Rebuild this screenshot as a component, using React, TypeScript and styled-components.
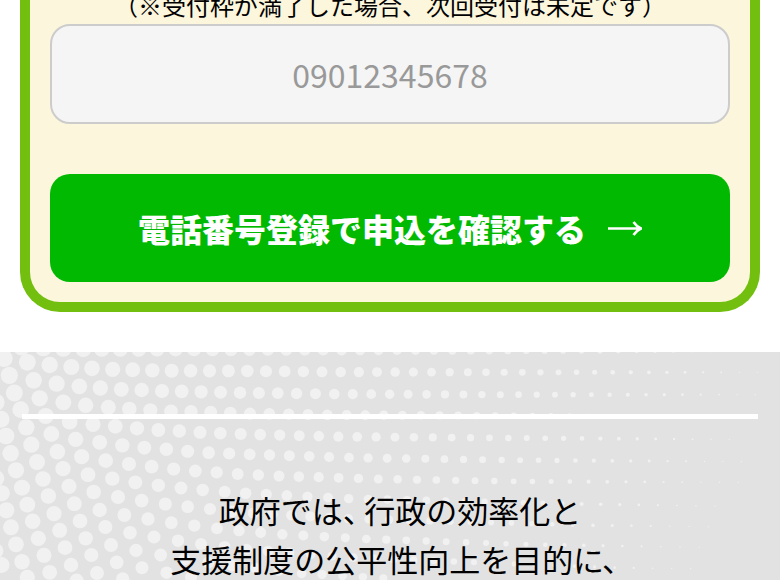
import React from "react";
import styled, { createGlobalStyle } from "styled-components";

const GlobalStyle = createGlobalStyle`
  *, *::before, *::after { box-sizing: border-box; }
  body {
    margin: 0;
    background: #fff;
    color: #000;
    font-family: "Noto Sans CJK JP", sans-serif;
    overflow-x: hidden;
  }
`;

const Page = styled.main`
  display: flex;
  flex-direction: column;
  gap: 40px;
  min-height: 100vh;
`;

const FormCard = styled.form`
  display: flex;
  flex-direction: column;
  margin: -12px 20px 0;
  padding: 0 20px 20px;
  border: 10px solid #72bf10;
  border-top: 0;
  border-radius: 0 0 40px 40px;
  background: #fcf6dc;
`;

const Note = styled.label`
  display: flex;
  justify-content: center;
  font-size: 24px;
  line-height: 34px;
  padding-bottom: 2px;
  white-space: nowrap;
`;

const PhoneInput = styled.input`
  width: 100%;
  height: 100px;
  padding: 0 20px;
  border: 2px solid #ccc;
  border-radius: 20px;
  background: #f5f5f5;
  color: #000;
  font-family: inherit;
  font-size: 32px;
  text-align: center;
  &::placeholder { color: #999; opacity: 1; }
`;

const SubmitButton = styled.button`
  display: flex;
  align-items: center;
  justify-content: center;
  gap: 22px;
  height: 108px;
  margin-top: 50px;
  border: 0;
  border-radius: 20px;
  background: #00b900;
  color: #fff;
  font-family: inherit;
  font-size: 32px;
  font-weight: 900;
  cursor: pointer;
`;

const ArrowIcon = styled.svg`
  width: 34px;
  height: 16px;
  fill: none;
  stroke: #fff;
  stroke-width: 2.6;
`;

const Purpose = styled.section`
  position: relative;
  flex: 1;
  overflow: hidden;
  background: #e2e2e2;
`;

const Halftone = styled.svg`
  position: absolute;
  inset: 0;
  width: 100%;
  fill: #f1f1f1;
`;

const PurposeBody = styled.div`
  position: relative;
  padding: 62px 22px 0;
`;

const Divider = styled.hr`
  height: 5px;
  margin: 0;
  border: 0;
  background: #fff;
`;

const Statement = styled.p`
  margin: 66px 0 0;
  padding-left: 20px;
  font-size: 31px;
  line-height: 49px;
  text-align: center;
  white-space: nowrap;
`;

const Comma = styled.span`
  margin-right: 6px;
  font-feature-settings: "halt";
`;

const LineEnd = styled.span`
  margin-right: 12px;
  font-feature-settings: "palt";
`;

type Anchor = [x: number, y: number, steps?: number];

/* Each row of dots runs left to right; steps is the number of dots
   from the previous anchor to this one. */
const rows: Anchor[][] = [
  [[-60, 0], [65, 6, 2], [130, 9], [190, 11], [250, 12], [1800, 18, 28], [2240, 18, 8]],
  [[12, 40], [82, 52], [149, 60], [214, 66], [276, 70], [338, 73], [398, 74], [457, 76], [515, 77], [742, 78, 4], [1022, 81, 5], [1567, 82, 10], [2272, 82, 13]],
  [[28, 91], [101, 106], [170, 116], [238, 124], [301, 129], [364, 133], [425, 135], [486, 138], [545, 139], [720, 143, 3], [1003, 147, 5], [1501, 149, 9], [2266, 149, 14]],
  [[-30, 122], [43, 144], [119, 160], [190, 172], [257, 181], [325, 187], [388, 192], [451, 196], [513, 199], [573, 200], [750, 206, 3], [1040, 210, 5], [2210, 215, 21]],
  [[-12, 172], [62, 194], [137, 213], [209, 230], [279, 238], [346, 244], [411, 250], [475, 255], [538, 258], [600, 262], [722, 267, 2], [1015, 275, 5], [1525, 279, 9], [2188, 283, 12]],
  [[3, 223], [79, 247], [154, 267], [227, 283], [299, 292], [367, 301], [433, 308], [499, 313], [563, 319], [626, 323], [749, 328, 2], [1047, 338, 5], [1505, 345, 8], [2224, 350, 13]],
  [[18, 273], [94, 299], [172, 320], [245, 335], [317, 347], [387, 357], [455, 365], [521, 372], [586, 378], [650, 382], [713, 387], [837, 393, 2], [1135, 402, 5], [1541, 409, 7], [2215, 412, 12]],
  [[-48, 298], [32, 325], [111, 351], [189, 371], [264, 389], [337, 401], [406, 412], [475, 421], [543, 429], [608, 435], [674, 440], [737, 445], [1046, 461, 5], [1745, 477, 12], [2145, 483, 7]],
  [[-32, 350], [48, 376], [129, 402], [207, 424], [281, 441], [354, 456], [425, 467], [496, 477], [563, 485], [630, 492], [697, 499], [760, 504], [1045, 521, 5], [1779, 541, 12], [2125, 545, 6]],
  [[-12, 400], [66, 428], [145, 453], [223, 476], [299, 495], [373, 510], [444, 522], [514, 533], [583, 542], [651, 550], [717, 557], [847, 568, 2], [1099, 582, 4], [1578, 598, 8], [2098, 607, 9]],
  [[5, 445], [82, 479], [162, 506], [240, 528], [316, 546], [390, 563], [462, 576], [534, 587], [603, 597], [674, 605], [740, 613], [1060, 638, 5], [1844, 668, 13], [2072, 671, 4]],
  [[19, 496], [98, 529], [179, 556], [257, 580], [333, 600], [408, 616], [482, 630], [553, 643], [625, 653], [697, 662], [905, 685, 3], [1150, 700, 4]],
  [[33, 547], [115, 580], [195, 608], [274, 630], [350, 652], [426, 668], [500, 683], [573, 697]],
  [[-32, 570], [48, 598], [132, 631], [213, 660], [291, 684], [368, 702]],
  [[-14, 618], [66, 650], [149, 682], [230, 707]],
  [[5, 660], [82, 697]],
];

function dotRadius(x: number, y: number) {
  const reach = Math.max(0, 1 - (x + (y - 80) * 0.4) / 2330);
  return Math.max(2, 26 * Math.pow(reach, 0.85));
}

function expand(row: Anchor[]) {
  const dots: { x: number; y: number }[] = [];
  row.forEach(([x, y, steps = 1], i) => {
    if (i === 0) {
      dots.push({ x, y });
      return;
    }
    const [px, py] = row[i - 1];
    for (let s = 1; s <= steps; s++) {
      dots.push({ x: px + ((x - px) * s) / steps, y: py + ((y - py) * s) / steps });
    }
  });
  return dots;
}

function HalftoneDots() {
  return (
    <Halftone viewBox="0 21 2340 702" aria-hidden="true">
      {rows.flatMap((row, r) =>
        expand(row).map(({ x, y }, i) => (
          <circle key={`${r}-${i}`} cx={x} cy={y} r={dotRadius(x, y)} />
        ))
      )}
    </Halftone>
  );
}

export default function App() {
  return (
    <>
      <GlobalStyle />
      <Page>
        <FormCard onSubmit={(e) => e.preventDefault()}>
          <Note htmlFor="phone">（※受付枠が満了した場合、次回受付は未定です）</Note>
          <PhoneInput id="phone" name="phone" type="tel" placeholder="09012345678" />
          <SubmitButton type="submit">
            電話番号登録で申込を確認する
            <ArrowIcon viewBox="0 0 34 16" aria-hidden="true">
              <path d="M0 8.5H32M25.5 2Q28.5 6.5 33 8.5Q28.5 10.5 25.5 15" />
            </ArrowIcon>
          </SubmitButton>
        </FormCard>
        <Purpose>
          <HalftoneDots />
          <PurposeBody>
            <Divider />
            <Statement>
              政府では<Comma>、</Comma>行政の効率化と
              <br />
              支援制度の公平性向上を目的<LineEnd>に、</LineEnd>
            </Statement>
          </PurposeBody>
        </Purpose>
      </Page>
    </>
  );
}
